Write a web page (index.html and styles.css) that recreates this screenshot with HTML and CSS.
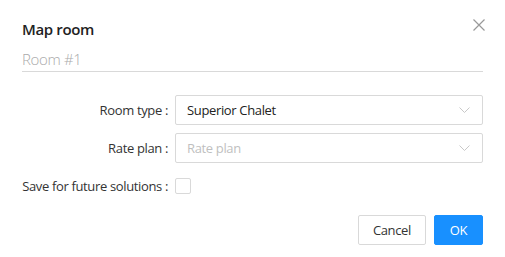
FILE: index.html
```html
<!DOCTYPE html>
<html lang="en">
<head>
  <meta charset="UTF-8">
  <meta name="viewport" content="width=device-width, initial-scale=1.0">
  <title>Map room</title>
  <link rel="stylesheet" href="styles.css">
</head>
<body>
  <div class="modal">
    <div class="modal-header">
      <h2 class="modal-title">Map room</h2>
      <button class="close" aria-label="Close">
        <svg width="12" height="12" viewBox="0 0 12 12"><path d="M0.5 0.5L11.5 11.5M11.5 0.5L0.5 11.5" stroke="#999" stroke-width="1.2" fill="none"/></svg>
      </button>
    </div>

    <div class="room-name">Room #1</div>

    <form class="form">
      <label class="label">Room type<span class="colon">:</span></label>
      <div class="select">
        <span class="value">Superior Chalet</span>
        <svg class="arrow" width="11" height="6" viewBox="0 0 11 6"><path d="M0.5 0.5L5.5 5.5L10.5 0.5" stroke="#c8c8c8" fill="none"/></svg>
      </div>

      <label class="label">Rate plan<span class="colon">:</span></label>
      <div class="select">
        <span class="value placeholder">Rate plan</span>
        <svg class="arrow" width="11" height="6" viewBox="0 0 11 6"><path d="M0.5 0.5L5.5 5.5L10.5 0.5" stroke="#c8c8c8" fill="none"/></svg>
      </div>

      <label class="label">Save for future solutions<span class="colon">:</span></label>
      <div class="check-wrap"><span class="checkbox"></span></div>
    </form>

    <div class="footer">
      <button class="btn">Cancel</button>
      <button class="btn btn-primary">OK</button>
    </div>
  </div>
</body>
</html>
```

FILE: styles.css
```css
body {
  margin: 0;
  background: #fff;
  font-family: "Open Sans", "Noto Sans", Arial, sans-serif;
  font-size: 13px;
  letter-spacing: -0.35px;
  color: #333;
}

.modal {
  padding: 18px 22px 12px 22px;
}

.modal-header {
  display: flex;
  justify-content: space-between;
  align-items: center;
  height: 22px;
}

.modal-title {
  margin: 0;
  font-size: 15px;
  font-weight: 600;
  color: #222;
}

.close {
  background: transparent;
  border: none;
  padding: 0;
  margin-right: -2px;
  margin-top: -8px;
  display: flex;
  cursor: pointer;
}

.room-name {
  margin-top: 9px;
  font-size: 15px;
  font-weight: 300;
  color: #aaa;
  line-height: 20px;
  padding-bottom: 2px;
  border-bottom: 1px solid #d9d9d9;
}

.form {
  display: grid;
  grid-template-columns: 153px 1fr;
  row-gap: 8px;
  align-items: center;
  margin-top: 23px;
}

.label {
  text-align: right;
  padding-right: 7px;
  white-space: nowrap;
  color: #333;
}

.colon {
  margin-left: 3px;
}

.select {
  height: 30px;
  box-sizing: border-box;
  border: 1px solid #d9d9d9;
  border-radius: 2px;
  display: flex;
  align-items: center;
  justify-content: space-between;
  padding: 0 12px 0 11px;
}

.value {
  color: #222;
}

.placeholder {
  color: #bfbfbf;
}

.check-wrap {
  height: 30px;
  display: flex;
  align-items: center;
}

.checkbox {
  width: 16px;
  height: 16px;
  box-sizing: border-box;
  border: 1px solid #d9d9d9;
  border-radius: 2px;
}

.footer {
  display: flex;
  justify-content: flex-end;
  gap: 8px;
  margin-top: 14px;
}

.btn {
  height: 30px;
  padding: 0 14px;
  font-family: inherit;
  font-size: 13px;
  letter-spacing: -0.35px;
  color: #333;
  background: #fff;
  border: 1px solid #d9d9d9;
  border-radius: 2px;
  cursor: pointer;
}

.btn-primary {
  color: #fff;
  background: #1890ff;
  border-color: #1890ff;
  width: 49px;
  padding: 0;
}
```
